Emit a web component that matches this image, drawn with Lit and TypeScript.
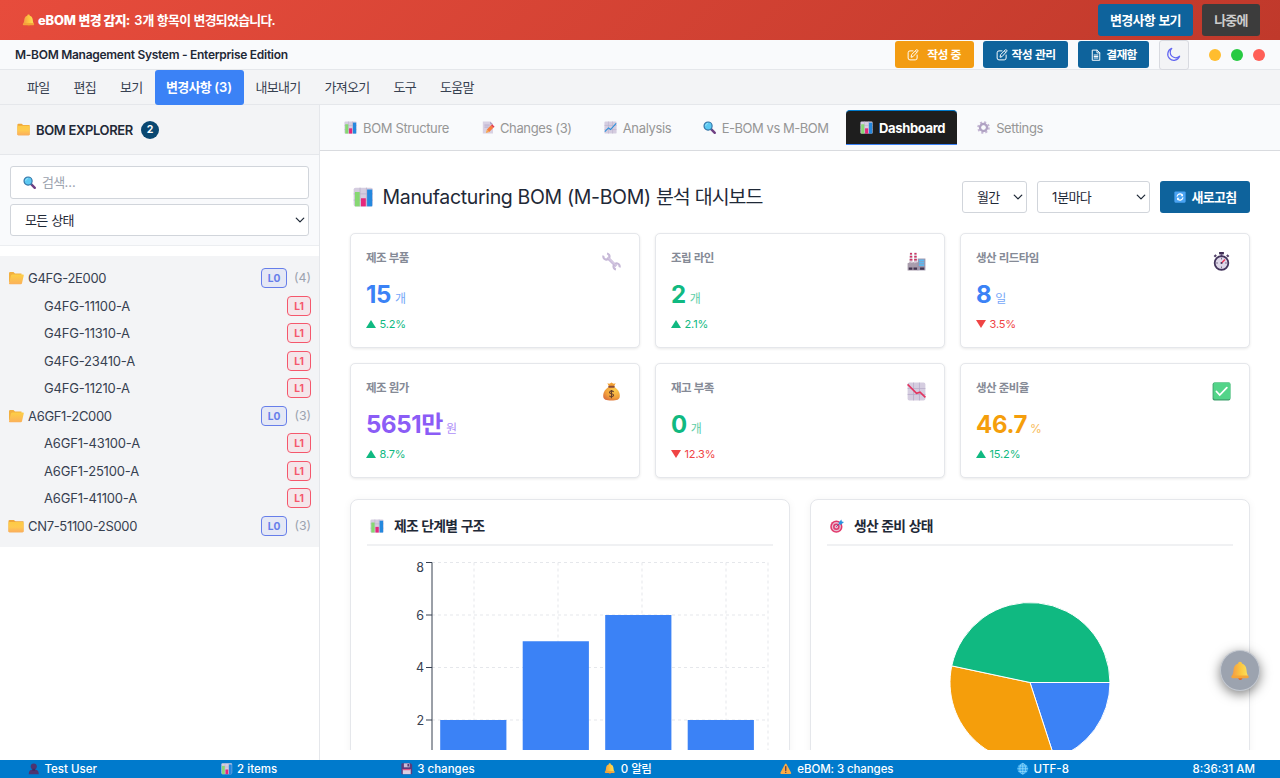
import { LitElement, html, css, svg } from "lit";
import { customElement, property } from "lit/decorators.js";
import { classMap } from "lit/directives/class-map.js";

/* Wraps Hangul runs so they can be tracked tighter than the Latin text. */
const ko = (text: string) =>
  text.split(/([가-힣]+)/).map((part) => (/[가-힣]/.test(part) ? html`<span class="ko">${part}</span>` : part));

const bars = svg`
  <rect x="1" y="1" width="30" height="30" rx="3" fill="#d5cde0"/>
  <path d="M11 1v30M21 1v30M1 11h30M1 21h30" stroke="#b9aec9" stroke-width="1.2"/>
  <rect x="3" y="8" width="7.5" height="23" fill="#86d872"/>
  <rect x="12.5" y="18" width="7.5" height="13" fill="#e5277b"/>
  <rect x="22" y="4" width="8" height="27" fill="#2488de"/>`;
const bell = svg`
  <path d="M13 26h7c0 6-7 6-7 0z" fill="#e06a2c"/>
  <path d="M16 1c2 0 3 1.200 3 3 5 1.500 7 5 7.500 11 .3 4 1 6 2.500 9H3c1.500-3 2.200-5 2.500-9C6 9 8 5.500 13 4c0-1.800 1-3 3-3z" fill="url(#bellg)"/>
  <rect x="2" y="23" width="28" height="4.500" rx="2.200" fill="#f5a53a"/>
  <defs><linearGradient id="bellg"><stop offset="0" stop-color="#f39a45"/><stop offset=".55" stop-color="#fdc83f"/><stop offset="1" stop-color="#fbe05e"/></linearGradient></defs>`;
const glass = svg`
  <path d="M20 20l9 9" stroke="#6f3f83" stroke-width="6" stroke-linecap="round"/>
  <path d="M18 18l4 4" stroke="#3f6d9b" stroke-width="3"/>
  <circle cx="12.500" cy="12.500" r="10" fill="#5cc9f2" stroke="#3573a5" stroke-width="2.800"/>
  <path d="M6.500 12a6 6 0 0 1 6-6" stroke="#a4e7fb" stroke-width="2" fill="none"/>`;

const glyphs: Record<string, unknown> = {
  bars,
  bell,
  glass,
  folder: svg`
    <path d="M1 4.500Q1 2 3.500 2h8l3.500 3H31v23q0 2-2 2H3q-2 0-2-2z" fill="#f0a73a"/>
    <path d="M1 9q0-2 2-2h26q2 0 2 2v19q0 2-2 2H3q-2 0-2-2z" fill="url(#fold)"/>
    <defs><linearGradient id="fold" x2="0" y2="1"><stop stop-color="#fdcb45"/><stop offset=".5" stop-color="#ffc950"/><stop offset="1" stop-color="#fbad5c"/></linearGradient></defs>`,
  open: svg`
    <path d="M2 5q0-2.500 2.500-2.500H11l3 3h13v20H4q-2 0-2-2z" fill="#f2b040"/>
    <path d="M6 10q.5-2 2.500-2H30q2 0 1.500 2l-3.500 18q-.4 2-2.400 2H3.500Q1.500 30 2 28z" fill="url(#foldo)"/>
    <defs><linearGradient id="foldo" x2="0" y2="1"><stop stop-color="#fdcf45"/><stop offset="1" stop-color="#fbb15a"/></linearGradient></defs>`,
  memo: svg`
    <path d="M2 1h18l7 7v23H2z" fill="#d8d0e3"/><path d="M20 1v7h7z" fill="#ac9fc4"/>
    <path d="M6 10h13M6 15h10" stroke="#b3a4c8" stroke-width="2"/>
    <path d="M12 21L22 10.500l6 6L18 27z" fill="#fa7d3f"/><path d="M22 10.500l3-2.500 6 6-3 2.500z" fill="#e5394b"/>
    <path d="M12 21l-2.500 8.500L18 27z" fill="#f8a64e"/>`,
  up: svg`
    <rect x="1" y="1" width="30" height="30" rx="3" fill="#d5cde0"/>
    <path d="M11 1v30M21 1v30M1 11h30M1 21h30" stroke="#b9aec9" stroke-width="1.200"/>
    <path d="M2 26l9-9 5 4L30 6" stroke="#278fdb" stroke-width="2.600" fill="none"/>`,
  down: svg`
    <rect x="1" y="1" width="30" height="30" rx="3" fill="#d5cde0"/>
    <path d="M11 1v30M21 1v30M1 11h30M1 21h30" stroke="#b5a9c7" stroke-width="1.200"/>
    <path d="M1 4l15 15 6-2 9 9" stroke="#e3345f" stroke-width="2.800" fill="none"/>`,
  gear: svg`
    <circle cx="16" cy="16" r="13" fill="none" stroke="#c4b6d3" stroke-width="5" stroke-dasharray="5.100 5.110"/>
    <circle cx="16" cy="16" r="8.500" fill="none" stroke="#b0a2c3" stroke-width="6"/>
    <circle cx="16" cy="16" r="5" fill="#f9fafc"/>`,
  refresh: svg`
    <rect x="1" y="1" width="30" height="30" rx="3" fill="#4aa3f2"/>
    <path d="M8 15a8 8 0 0 1 13.500-5M24 17a8 8 0 0 1-13.500 5" stroke="#fff" stroke-width="3" fill="none"/>
    <path d="M24 7v7h-7zM8 25v-7h7z" fill="#fff"/>`,
  wrench: svg`
    <path d="M9 9l15 15" stroke="#cbbcdc" stroke-width="5"/>
    <path d="M2.500 6a5.200 5.200 0 1 0 6-3.500M29.500 26a5.200 5.200 0 1 0-6 3.500" fill="none" stroke="#c6b8d7" stroke-width="3.600"/>
    <path d="M10 9l14 14" stroke="#ded5e8" stroke-width="1.500"/>`,
  factory: svg`
    <path d="M5 1h3.500l1 18h-5.500zM12.500 1H16l1 18h-5.500z" fill="#d7c9d6"/>
    <path d="M5 3h3.500M4.700 8h4.100M4.500 13h4.600M12.500 3H16M12.200 8h4.100M12 13h4.600" stroke="#cf3563" stroke-width="2.500"/>
    <path d="M1 19l5-2v2l6-2v2l7-2v14H1z" fill="#a99dad"/><rect x="18" y="11" width="13" height="20" fill="#9d95ac"/>
    <path d="M20 14h9M20 18h9M20 22h9" stroke="#5cb9f0" stroke-width="2.800"/>
    <path d="M3 26h6v4H3zM11 26h6v4h-6zM22 26h7v4h-7z" fill="#43354f"/>`,
  watch: svg`
    <path d="M12 0h8v4h-8z" fill="#3c2b52"/><path d="M14.500 3h3v5h-3z" fill="#6a5783"/><path d="M4 8l3-3M28 8l-3-3" stroke="#55446c" stroke-width="3.500"/>
    <circle cx="16" cy="18.500" r="11.500" fill="#ded7e8" stroke="#43345c" stroke-width="3"/>
    <path d="M16 9.500v3M16 24.500v3M7 18.500h3M22 18.500h3" stroke="#6f617f" stroke-width="1.500"/>
    <path d="M16 18.500l6-6" stroke="#ed3152" stroke-width="2.200"/><circle cx="16" cy="18.500" r="1.800" fill="#43345c"/>`,
  money: svg`
    <path d="M9 2q4 2 7-1 3 3 7 1l-3 6h-8z" fill="#f3a134"/>
    <path d="M12 8h8c6 3 10 9 10 15 0 7-5 8-14 8S2 30 2 23c0-6 4-12 10-15z" fill="url(#mon)"/>
    <rect x="10.500" y="6.500" width="11" height="3" rx="1.500" fill="#8a4b38"/>
    <path d="M19.500 17q-1-2-3.500-2t-3.500 2.400q0 2 3.500 2.500 3.500 .5 3.500 2.600t-3.500 2.500q-2.500 0-3.500-2M16 13.500v14" fill="none" stroke="#67402d" stroke-width="1.800"/>
    <defs><radialGradient id="mon" cx=".7" cy=".25" r=".9"><stop stop-color="#ffcc4d"/><stop offset=".6" stop-color="#f2a13c"/><stop offset="1" stop-color="#d96a3d"/></radialGradient></defs>`,
  check: svg`
    <rect x="1" y="1" width="30" height="30" rx="3" fill="#3ea06d"/><rect x="2.500" y="1" width="28.500" height="28" rx="2.500" fill="#53d489"/>
    <path d="M7.500 16l5.500 6L25 9.500" fill="none" stroke="#fff" stroke-width="3" stroke-linecap="round"/>`,
  target: svg`
    <circle cx="14.500" cy="17.500" r="14" fill="#e2396b"/><circle cx="14.500" cy="17.500" r="10.500" fill="#e8bfd2"/>
    <circle cx="14.500" cy="17.500" r="7.500" fill="#dc3c70"/><circle cx="14.500" cy="17.500" r="4" fill="#eebdd2"/>
    <path d="M14 18L25 7" stroke="#7a4b86" stroke-width="2"/>
    <path d="M20 8l6-7 1 4.500L32 7l-7 6-5-.5z" fill="#2b92df"/>`,
  user: svg`<circle cx="16" cy="10" r="8.500" fill="#4d3470"/><path d="M2 31c0-8 4-12 9-12h10c5 0 9 4 9 12z" fill="#4d3470"/><path d="M12 16h8v6h-8z" fill="#402a61"/>`,
  disk: svg`
    <path d="M1 3q0-2 2-2h24l4 4v24q0 2-2 2H3q-2 0-2-2z" fill="#5c3b7c"/>
    <path d="M8 1h16v11H8z" fill="#c9bdd8"/><path d="M18 2.500h4v7h-4z" fill="#4a2d68"/>
    <path d="M5 17h22v14H5z" fill="#d9cfe2"/><path d="M5 17h22v3H5z" fill="#e1467d"/>`,
  warn: svg`<path d="M14 3q2-3 4 0l13 24q1 3-2 3.500H3Q0 30 1 27z" fill="#fbab43"/><path d="M16 10v11" stroke="#4d3558" stroke-width="3.400" stroke-linecap="round"/><circle cx="16" cy="26" r="2" fill="#4d3558"/>`,
  globe: svg`<circle cx="16" cy="16" r="15" fill="#2aa0ec"/>
    <path d="M16 1v30M1 16h30M4 8.500h24M4 23.500h24" stroke="#a3e3fc" stroke-width="1.800"/><ellipse cx="16" cy="16" rx="8" ry="15" fill="none" stroke="#a3e3fc" stroke-width="1.800"/>`,
};

const lineIcons: Record<string, unknown> = {
  edit: svg`<path d="M8 2.500H4A2.500 2.500 0 0 0 1.500 5v7A2.500 2.500 0 0 0 4 14.500h7a2.500 2.500 0 0 0 2.500-2.500V8"/><path d="M5.500 10.500l.6-3L12.500 1.200q.8-.7 1.700.2.900.9.200 1.700L8.400 9.800z"/><path d="M11.200 2.600l1.900 1.900"/>`,
  doc: svg`<path d="M3 14.500v-13h6.500L13 5v9.500z"/><path d="M9.300 1.500V5.200H13M5.500 8h5M5.500 10h5M5.500 12h5"/>`,
  moon: svg`<path d="M14.500 9.800A6.500 6.500 0 1 1 6.200 1.500a5.800 5.800 0 0 0 8.300 8.300z"/>`,
  chevron: svg`<path d="M3 5.500L8 10.500l5-5" stroke-width="1.700" stroke="#1f2937"/>`,
};

@customElement("fluent-glyph")
class FluentGlyph extends LitElement {
  @property() name = "bars";
  static styles = css`
    :host { display: inline-block; flex: none; width: 13px; height: 13px; }
    svg { display: block; width: 100%; height: 100%; overflow: visible; }
  `;
  render() {
    return html`<svg viewBox="0 0 32 32" preserveAspectRatio="none">${glyphs[this.name]}</svg>`;
  }
}

@customElement("line-icon")
class LineIcon extends LitElement {
  @property() name = "edit";
  static styles = css`
    :host { display: inline-block; flex: none; width: 12px; height: 12px; }
    svg { display: block; width: 100%; height: 100%; fill: none; stroke: currentColor; stroke-width: 1.3; stroke-linecap: round; stroke-linejoin: round; }
  `;
  render() {
    return html`<svg viewBox="0 0 16 16">${lineIcons[this.name]}</svg>`;
  }
}

interface Row { name: string; level: 0 | 1; count?: number; open?: boolean }
interface Kpi { label: string; value: string; unit: string; delta: string; rise: boolean; tone: string; icon: string }

@customElement("app-root")
class AppRoot extends LitElement {
  private menu = ["파일", "편집", "보기", "변경사항 (3)", "내보내기", "가져오기", "도구", "도움말"];
  private tabs = [
    ["bars", "BOM Structure"], ["memo", "Changes (3)"], ["up", "Analysis"],
    ["glass", "E-BOM vs M-BOM"], ["bars", "Dashboard"], ["gear", "Settings"],
  ];
  private rows: Row[] = [
    { name: "G4FG-2E000", level: 0, count: 4, open: true },
    { name: "G4FG-11100-A", level: 1 }, { name: "G4FG-11310-A", level: 1 },
    { name: "G4FG-23410-A", level: 1 }, { name: "G4FG-11210-A", level: 1 },
    { name: "A6GF1-2C000", level: 0, count: 3, open: true },
    { name: "A6GF1-43100-A", level: 1 }, { name: "A6GF1-25100-A", level: 1 }, { name: "A6GF1-41100-A", level: 1 },
    { name: "CN7-51100-2S000", level: 0, count: 3 },
  ];
  private kpis: Kpi[] = [
    { label: "제조 부품", value: "15", unit: "개", delta: "5.2%", rise: true, tone: "blue", icon: "wrench" },
    { label: "조립 라인", value: "2", unit: "개", delta: "2.1%", rise: true, tone: "green", icon: "factory" },
    { label: "생산 리드타임", value: "8", unit: "일", delta: "3.5%", rise: false, tone: "blue", icon: "watch" },
    { label: "제조 원가", value: "5651만", unit: "원", delta: "8.7%", rise: true, tone: "violet", icon: "money" },
    { label: "재고 부족", value: "0", unit: "개", delta: "12.3%", rise: false, tone: "green", icon: "down" },
    { label: "생산 준비율", value: "46.7", unit: "%", delta: "15.2%", rise: true, tone: "amber", icon: "check" },
  ];
  private status = [
    ["user", "Test User"], ["bars", "2 items"], ["disk", "3 changes"], ["bell", "0 알림"],
    ["warn", "eBOM: 3 changes"], ["globe", "UTF-8"], ["", "8:36:31 AM"],
  ];

  static styles = css`
    :host { display: flex; flex-direction: column; width: 1280px; height: 778px; overflow: hidden; box-sizing: border-box;
      font-family: Inter, "Noto Sans CJK KR", sans-serif; font-size: 13px; line-height: 18px; color: #1f2937; background: #fff; position: relative; white-space: nowrap; }
    *, *::before { box-sizing: border-box; }
    .ko { letter-spacing: -0.055em; }
    .banner { flex: none; height: 40px; display: flex; align-items: center; padding: 0 20px 0 22px; color: #fff; font-size: 12.9px; font-weight: 600;
      background: linear-gradient(135deg, #e74c3c, #c0392b); }
    .banner .msg { display: flex; gap: 4px; margin: 1px auto 0 3px; }
    .banner b { font-weight: 800; letter-spacing: -0.15px; }
    .banner button { height: 32px; font-size: 13px; margin-left: 9px; }
    button { font-family: inherit; font-weight: 600; font-size: 11.8px; line-height: 18px; border: 0; border-radius: 3px; color: #fff; background: #0e639c; padding: 0;
      display: flex; align-items: center; justify-content: center; white-space: nowrap; }
    .see { width: 95px; } .banner .later { width: 58px; background: #3c3c3c; color: #ccc; }
    .title { flex: none; height: 30px; display: flex; align-items: center; padding: 0 15px; background: #f9fafc; border-bottom: 1px solid #e5e7eb; font-size: 12px; font-weight: 600; }
    .title .name { margin-right: auto; letter-spacing: -0.28px; }
    .title button { height: 27px; gap: 4px; margin-right: 10px; }
    .title .writing { width: 79px; background: #f39c12; gap: 8px; margin-right: 9px; padding-right: 1px; }
    .manage { width: 85px; } .inbox { width: 71px; }
    .title .mode { width: 30px; height: 30px; background: #f3f4f6; border: 1px solid #d8dae0; color: #6366f1; margin-right: 20px; padding-right: 1px; }
    .mode line-icon { width: 15px; height: 15px; }
    .dots { display: flex; gap: 10px; }
    .dots i { width: 12px; height: 12px; border-radius: 50%; background: #ffbd2e; }
    .dots i:nth-child(2) { background: #28ca42; } .dots i:nth-child(3) { background: #ff5f57; }
    .menu { flex: none; height: 35px; display: flex; padding-left: 15px; background: #f3f4f6; border-bottom: 1px solid #e5e7eb; font-size: 13px; color: #374151; }
    .menu span.item { padding: 0 12px; line-height: 35px; height: 35px; border-radius: 3px; }
    .menu span.active { background: #3b82f6; color: #fff; font-weight: 600; padding: 0 11.6px; letter-spacing: -0.1px; }
    .body { flex: 1; min-height: 0; display: flex; }
    .side { width: 320px; flex: none; border-right: 1px solid #e5e7eb; display: flex; flex-direction: column; }
    .head { height: 50px; display: flex; align-items: center; padding-left: 17px; background: #f3f4f6; border-bottom: 1px solid #e5e7eb; font-weight: 600; }
    .head .txt { margin: 0 8px 0 6px; letter-spacing: -0.36px; }
    .head .badge { width: 18px; height: 18px; border-radius: 9px; background: #094771; color: #fff; text-align: center; font-size: 10.5px; font-weight: 700; }
    .filters { height: 91px; background: #f9fafc; border-bottom: 1px solid #eceef1; padding: 10.5px 10px 0; display: flex; flex-direction: column; gap: 5px; }
    .field { height: 32px; display: flex; align-items: center; border: 1px solid #d1d5db; border-radius: 3px; background: #fff; padding: 0 2px 0 14px; font-size: 13px; }
    .field line-icon { margin-left: auto; }
    .field.search { padding-left: 12px; gap: 6px; color: #9ca3af; height: 33.5px; }
    .tree { margin-top: 10px; background: #f3f4f6; padding: 8.6px 8px 7.4px; color: #374151; }
    .row { height: 27.5px; display: flex; align-items: center; }
    .row fluent-glyph { width: 16px; height: 14px; margin-right: 4px; }
    .row .nm { margin-right: auto; letter-spacing: -0.32px; }
    .row.child { padding-left: 36px; }
    .row.child .nm { letter-spacing: -0.18px; }
    .tag { width: 26px; height: 20px; line-height: 18px; text-align: center; font-size: 10.2px; font-weight: 700; border-radius: 4px; border: 1px solid #667eea; color: #667eea; background: #e5e8f5; }
    .child .tag { width: 24px; border-color: #f5576c; color: #f5576c; background: #f4e6ea; }
    .cnt { width: 24px; text-align: right; font-size: 12.3px; color: #9ca3af; }
    .main { flex: 1; min-width: 0; display: flex; flex-direction: column; padding-bottom: 10px; }
    .tabs { flex: none; height: 46px; background: #f9fafc; border-bottom: 1px solid #d9dbdf; display: flex; padding: 5px 0 0 10px; gap: 6px; color: #969696; letter-spacing: -0.36px; }
    .tab { display: flex; align-items: center; height: 35px; gap: 6px; padding: 0 11.5px 0 14px; border-radius: 4px 4px 0 0; }
    .tab:nth-child(1) { padding-right: 13px; }
    .tab:nth-child(2) { gap: 5px; padding-right: 12px; }
    .tab:nth-child(4) { letter-spacing: -0.47px; }
    .tab.active { background: #1e1e1e; color: #fff; font-weight: 700; padding: 0 12px 0 14px; border-top: 1px solid #007acc; border-bottom: 1.5px solid #3b82f6; }
    .content { flex: 1; min-height: 0; overflow: hidden; padding: 30px; display: flex; flex-direction: column; }
    .top { flex: none; height: 32px; display: flex; align-items: center; gap: 10px; }
    .top h1 { margin: 0 auto 0 0; font-size: 19.5px; font-weight: 400; display: flex; align-items: center; gap: 9px; padding-left: 3px; line-height: 28px; letter-spacing: -0.34px; }
    .top h1 fluent-glyph { width: 20.5px; height: 20px; }
    .month { width: 65px; } .every { width: 113px; }
    .top button { width: 90px; height: 32px; font-size: 13px; gap: 6px; }
    .top button fluent-glyph { width: 12px; height: 12px; }
    .kpis { flex: none; display: grid; grid-template-columns: repeat(3, 290px); gap: 15px; margin-top: 20px; }
    .card { background: #fff; border: 1px solid #e5e7eb; border-radius: 5px; box-shadow: 0 1px 3px rgba(0,0,0,.09); }
    .kpi { height: 115px; padding: 15px; display: flex; justify-content: space-between; }
    .kpi > fluent-glyph { width: 19px; height: 19px; margin: 2.5px 3px 0 0; }
    .lab { font-size: 11.5px; font-weight: 600; color: #858a96; line-height: 17px; padding-top: 1px; }
    .val { margin-top: 11px; font-size: 24px; line-height: 34px; font-weight: 700; display: flex; align-items: baseline; gap: 4px; letter-spacing: -0.35px; }
    .val small { font-size: 12px; font-weight: 400; opacity: .7; }
    .val.amber { gap: 3px; }
    .dl { margin-top: 0; font-size: 11px; line-height: 16px; color: #10b981; display: flex; align-items: center; gap: 3.5px; letter-spacing: -0.15px; }
    .dl svg { width: 10px; height: 8px; fill: currentColor; }
    .dl.fall { color: #ef4444; }
    .blue { color: #3b82f6; } .green { color: #10b981; } .violet { color: #8b5cf6; } .amber { color: #f59e0b; }
    .charts { flex: none; display: grid; grid-template-columns: 440px 440px; gap: 20px; margin-top: 21px; }
    .chart { height: 350px; border-radius: 8px; padding: 15px 16px; box-shadow: 0 1px 8px rgba(0,0,0,.05); }
    .chart h2 { margin: 0; height: 31px; border-bottom: 2px solid #f0f1f3; font-size: 13.8px; font-weight: 600; display: flex; gap: 10px; padding: 2px 0 0 3px; line-height: 19px; }
    .chart h2 fluent-glyph { margin-top: 2px; width: 14px; height: 14px; }
    .plot { display: block; width: 406px; height: 300px; }
    .plot text { font-size: 12.5px; fill: #374151; text-anchor: end; }
    .status { flex: none; height: 18px; background: #007acc; color: #fff; display: flex; justify-content: space-between; padding: 0 25px 0 28px; font-size: 11.5px; font-weight: 500; }
    .status span.st { display: flex; align-items: center; gap: 5px; }
    .status span.st:nth-child(4) { margin: 0 5px 0 6px; }
    .status span.st:nth-child(5) { letter-spacing: -0.1px; gap: 6px; }
    .status fluent-glyph { width: 11.5px; height: 11.5px; }
    .fab { position: absolute; left: 1220px; top: 650px; width: 40px; height: 41px; border-radius: 50%; background: #9ca3af; border: 1px solid #c3c8d0; box-shadow: 0 3px 12px rgba(0,0,0,.5); display: flex; align-items: center; justify-content: center; }
    .fab fluent-glyph { width: 20px; height: 20px; }
  `;

  private barChart() {
    const yOf = (v: number) => 720 - (v - 2) * 26.25;
    return html`<svg class="plot" viewBox="367 546 406 300">
      <g stroke="#e5e7eb" stroke-dasharray="3 3">
        ${[8, 6, 4, 2].map((v) => svg`<path d="M432 ${yOf(v)}H768"/>`)}
        ${[474, 558, 642, 726, 768].map((x) => svg`<path d="M${x} 562.500V772"/>`)}
      </g>
      <path d="M432 562.500V772" stroke="#374151" fill="none"/>
      ${[8, 6, 4, 2].map((v) => svg`<path d="M426 ${yOf(v)}h6" stroke="#374151"/><text x="424" y=${yOf(v) + (v === 8 ? 9.5 : 4.5)}>${v}</text>`)}
      ${[2, 5, 6, 2].map((v, i) => svg`<rect x=${440.2 + i * 82.5} y=${yOf(v)} width="66.200" height=${772 - yOf(v)} fill="#3b82f6"/>`)}
    </svg>`;
  }

  private pieChart() {
    const cx = 1030, cy = 682.5, r = 80;
    const pt = (deg: number) => `${cx + r * Math.cos((deg * Math.PI) / 180)} ${cy + r * Math.sin((deg * Math.PI) / 180)}`;
    const slices: [number, number, string][] = [[0, 72, "#3b82f6"], [72, 192, "#f59e0b"], [192, 360, "#10b981"]];
    return html`<svg class="plot" viewBox="827 546 406 300">
      ${slices.map(([a, b, c]) => svg`<path d="M${cx} ${cy}L${pt(a)}A${r} ${r} 0 0 1 ${pt(b)}Z" fill=${c} stroke="#fff"/>`)}
    </svg>`;
  }

  render() {
    return html`
      <div class="banner"><fluent-glyph name="bell"></fluent-glyph>
        <div class="msg"><b>${ko("eBOM 변경 감지:")}</b><span>${ko("3개 항목이 변경되었습니다.")}</span></div>
        <button class="see"><span>${ko("변경사항 보기")}</span></button><button class="later"><span>${ko("나중에")}</span></button></div>
      <div class="title"><span class="name">M-BOM Management System - Enterprise Edition</span>
        <button class="writing"><line-icon name="edit"></line-icon><span>${ko("작성 중")}</span></button>
        <button class="manage"><line-icon name="edit"></line-icon><span>${ko("작성 관리")}</span></button>
        <button class="inbox"><line-icon name="doc"></line-icon><span>${ko("결재함")}</span></button>
        <button class="mode"><line-icon name="moon"></line-icon></button>
        <div class="dots"><i></i><i></i><i></i></div></div>
      <div class="menu">${this.menu.map((m, i) => html`<span class=${classMap({ item: true, active: i === 3 })}>${ko(m)}</span>`)}</div>
      <div class="body">
        <div class="side">
          <div class="head"><fluent-glyph name="folder"></fluent-glyph><span class="txt">BOM EXPLORER</span><span class="badge">2</span></div>
          <div class="filters">
            <div class="field search"><fluent-glyph name="glass"></fluent-glyph><span>${ko("검색...")}</span></div>
            <div class="field"><span>${ko("모든 상태")}</span><line-icon name="chevron"></line-icon></div>
          </div>
          <div class="tree">${this.rows.map((r) => html`<div class=${classMap({ row: true, child: r.level === 1 })}>
            ${r.level === 0 ? html`<fluent-glyph name=${r.open ? "open" : "folder"}></fluent-glyph>` : ""}
            <span class="nm">${r.name}</span><span class="tag">L${r.level}</span>${r.count ? html`<span class="cnt">(${r.count})</span>` : ""}</div>`)}</div>
        </div>
        <div class="main">
          <div class="tabs">${this.tabs.map(([icon, label], i) => html`<div class=${classMap({ tab: true, active: i === 4 })}>
            <fluent-glyph name=${icon}></fluent-glyph><span>${label}</span></div>`)}</div>
          <div class="content">
            <div class="top"><h1><fluent-glyph name="bars"></fluent-glyph><span>${ko("Manufacturing BOM (M-BOM) 분석 대시보드")}</span></h1>
              <div class="field month"><span>${ko("월간")}</span><line-icon name="chevron"></line-icon></div>
              <div class="field every"><span>${ko("1분마다")}</span><line-icon name="chevron"></line-icon></div>
              <button><fluent-glyph name="refresh"></fluent-glyph><span>${ko("새로고침")}</span></button></div>
            <div class="kpis">${this.kpis.map((k) => html`<div class="card kpi"><div>
                <div class="lab">${ko(k.label)}</div>
                <div class="val ${k.tone}"><span>${ko(k.value)}</span><small>${ko(k.unit)}</small></div>
                <div class=${classMap({ dl: true, fall: !k.rise })}><svg viewBox="0 0 10 8">${k.rise ? svg`<path d="M5 0l5 8H0z"/>` : svg`<path d="M0 0h10L5 8z"/>`}</svg><span>${k.delta}</span></div>
              </div><fluent-glyph name=${k.icon}></fluent-glyph></div>`)}</div>
            <div class="charts">
              <div class="card chart"><h2><fluent-glyph name="bars"></fluent-glyph><span>${ko("제조 단계별 구조")}</span></h2>${this.barChart()}</div>
              <div class="card chart"><h2><fluent-glyph name="target"></fluent-glyph><span>${ko("생산 준비 상태")}</span></h2>${this.pieChart()}</div>
            </div>
          </div>
        </div>
      </div>
      <div class="status">${this.status.map(([icon, label]) => html`<span class="st">${icon ? html`<fluent-glyph name=${icon}></fluent-glyph>` : ""}<span>${ko(label)}</span></span>`)}</div>
      <div class="fab"><fluent-glyph name="bell"></fluent-glyph></div>`;
  }
}
